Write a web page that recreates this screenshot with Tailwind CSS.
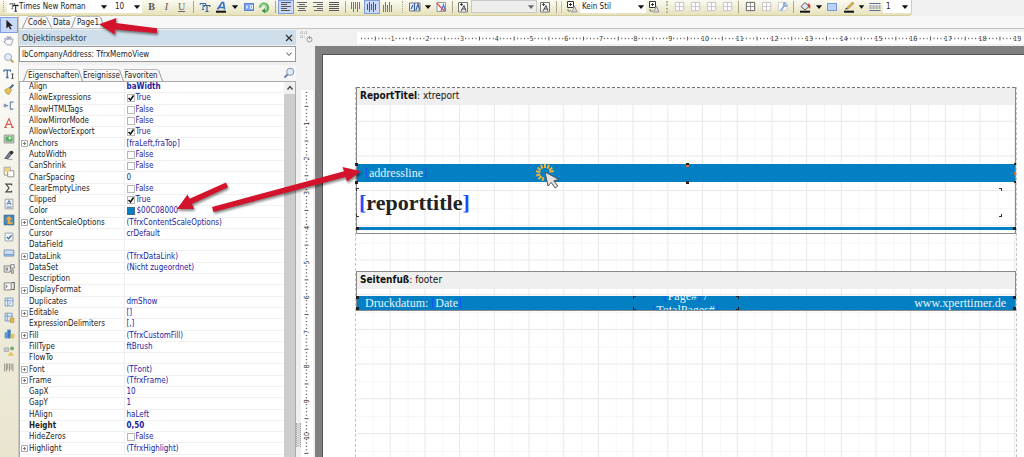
<!DOCTYPE html>
<html lang="de">
<head>
<meta charset="utf-8">
<title>Report Designer</title>
<script src="https://cdn.jsdelivr.net/npm/@tailwindcss/browser@4"></script>
</head>
<body class="relative flex h-screen flex-col overflow-hidden bg-[#f0f0f0] text-[8px] leading-[11px] text-[#222] font-['DejaVu_Sans_Condensed','Noto_Sans',sans-serif]">

<svg width="0" height="0" class="absolute">
  <defs>
    <symbol id="down" viewBox="0 0 8 8"><path d="M1.5 2.5h5L4 5.5z" fill="#111"/></symbol>
    <symbol id="lines-l" viewBox="0 0 12 12"><path d="M1 1.500h10M1 3.500h6M1 5.500h10M1 7.500h6M1 9.500h9" stroke="#555"/></symbol>
    <symbol id="lines-c" viewBox="0 0 12 12"><path d="M1 1.500h10M3 3.500h6M1 5.500h10M3 7.500h6M2 9.500h8" stroke="#666"/></symbol>
    <symbol id="lines-r" viewBox="0 0 12 12"><path d="M1 1.500h10M5 3.500h6M1 5.500h10M5 7.500h6M2 9.500h9" stroke="#666"/></symbol>
    <symbol id="lines-j" viewBox="0 0 12 12"><path d="M1 1.500h10M1 3.500h10M1 5.500h10M1 7.500h10M1 9.500h10" stroke="#555"/></symbol>
    <symbol id="v-top" viewBox="0 0 12 12"><path d="M1.500 1v7M3.500 1v10M5.500 1v7M7.500 1v10M9.500 1v7" stroke="#777"/></symbol>
    <symbol id="v-mid" viewBox="0 0 12 12"><path d="M1.500 3v6M3.500 1v10M5.500 3v6M7.500 1v10M9.500 3v6" stroke="#555"/></symbol>
    <symbol id="v-bot" viewBox="0 0 12 12"><path d="M1.500 4v7M3.500 1v10M5.500 4v7M7.500 1v10M9.500 4v7" stroke="#777"/></symbol>
    <symbol id="frame" viewBox="0 0 12 12"><path d="M1.500 1.500h9v9h-9zM6 1.500v9M1.500 6h9" fill="#fff" stroke="#c3c3c3"/></symbol>
    <symbol id="tt" viewBox="0 0 12 12"><path d="M1 2h6M4 2v6M2.800 8h2.400M1.200 1.500v2M6.800 1.500v2" stroke="#666" fill="none"/><path d="M5 4h6M8 4v7M6.500 11h3M5.200 3.500v2M10.800 3.500v2" stroke="#222" stroke-width="1.300" fill="none"/></symbol>
    <symbol id="style" viewBox="0 0 12 12"><path d="M1.500.5h6v6h-6zM3 3.500h3M4.500 2v3" fill="#fff" stroke="#333"/><path d="M6 10.500L8.500 5l2.500 6H5" stroke="#999" fill="#ddd"/><path d="M2 8v2h3" stroke="#777" fill="none"/></symbol>
    <symbol id="sheet" viewBox="0 0 12 12"><path d="M1.500 1.500h9v9.500h-9z" fill="#f8f8f8" stroke="#777"/><path d="M3 3.500h3M4.500 2v3M4 10l3-5.500L9 10M5 8h3" stroke="#444" fill="none"/></symbol>
  </defs>
</svg>

<!-- formatting toolbar -->
<header class="flex h-4 shrink-0">
  <div class="flex h-4 items-center rounded-br-sm border-b border-r border-[#d5cf9f] bg-gradient-to-b from-[#fbfaf2] to-[#e6e2bd] pb-1 pt-[2px]">
    <span class="flex w-[7px] justify-center"><span class="h-[11px] border-l border-dotted border-[#a9a68c]"></span></span>
    <label class="flex h-[13px] w-[105px] items-center bg-white pl-[2px]">
      <svg class="size-[10px]"><use href="#tt"/></svg>
      <select aria-label="Schriftart" class="w-[80px] appearance-none bg-transparent outline-none"><option>Times New Roman</option></select>
      <svg class="size-[10px]"><use href="#down"/></svg>
    </label>
    <label class="flex h-[13px] w-[30px] items-center bg-white pl-[3px]">
      <select aria-label="Schriftgröße" class="w-[17px] appearance-none bg-transparent outline-none"><option>10</option></select>
      <svg class="size-[10px]"><use href="#down"/></svg>
    </label>
    <button aria-label="Fett" class="ml-[2px] w-[15px] font-['Liberation_Serif',serif] text-[10px] font-bold text-[#555]">B</button>
    <button aria-label="Kursiv" class="w-[15px] font-['Liberation_Serif',serif] text-[10px] italic text-[#555]">I</button>
    <button aria-label="Unterstrichen" class="w-[15px] font-['Liberation_Serif',serif] text-[10px] text-[#666] underline">U</button>
    <span class="flex w-2 justify-center"><span class="h-3 w-px bg-[#aaa78c]"></span></span>
    <button aria-label="Schrift" class="flex w-[15px] justify-center"><svg class="size-3" viewBox="0 0 12 12" fill="none"><path d="M1 2.500h6M4 2.500v6M2.800 8.500h2.400M1.200 2v2M6.800 2v2" stroke="#3f74a8"/><path d="M5 4.500h6M8 4.500v6M6.500 10.500h3M5.200 4v2M10.800 4v2" stroke="#3a5f86" stroke-width="1.200"/></svg></button>
    <button aria-label="Schriftfarbe" class="flex w-[17px] justify-center"><svg class="size-3" viewBox="0 0 12 12" fill="none"><path d="M2.500 8.500L7 1.500h1.500L9.500 8.500M4 6.500h5.500" stroke="#3571c4" stroke-width="1.700"/><path d="M1 10.700h10" stroke="#111" stroke-width="2"/></svg></button>
    <button aria-label="Farben" class="flex w-3 justify-center"><svg class="size-[10px]"><use href="#down"/></svg></button>
    <button aria-label="Hervorheben" class="flex w-[15px] justify-center"><svg class="size-3" viewBox="0 0 12 12"><rect x="1.500" y="2.500" width="9" height="7" fill="#7fa6ee" stroke="#5d83cc"/><path d="M4 4.500v3M3 6h2M7.500 4.500h2v3h-2z" stroke="#e8f0ff" fill="none"/></svg></button>
    <button aria-label="Drehung" class="flex w-4 justify-center"><svg class="size-3" viewBox="0 0 12 12" fill="none"><path d="M2 6.500a4 4 0 1 1 4 4.300" stroke="#62b161" stroke-width="2.400"/><path d="M3.500 6a2.200 2.200 0 1 1 2.500 2" stroke="#a6d9a0" stroke-width="1.600"/><path d="M7 7.500v4.500L3.500 10z" fill="#3d8d48"/></svg></button>
    <span class="flex w-[6px] justify-center"><span class="h-3 w-px bg-[#aaa78c]"></span></span>
    <button aria-label="Links" class="flex h-[14px] w-4 items-center justify-center border border-[#7f9fdc] bg-[#c9d9f7]"><svg class="h-3 w-3 shrink-0"><use href="#lines-l"/></svg></button>
    <button aria-label="Zentriert" class="flex w-4 justify-center"><svg class="size-3"><use href="#lines-c"/></svg></button>
    <button aria-label="Rechts" class="flex w-4 justify-center"><svg class="size-3"><use href="#lines-r"/></svg></button>
    <button aria-label="Blocksatz" class="flex w-4 justify-center"><svg class="size-3"><use href="#lines-j"/></svg></button>
    <span class="flex w-[6px] justify-center"><span class="h-3 w-px bg-[#aaa78c]"></span></span>
    <button aria-label="Oben" class="flex w-4 justify-center"><svg class="size-3"><use href="#v-top"/></svg></button>
    <button aria-label="Mitte" class="flex h-[14px] w-4 items-center justify-center border border-[#7f9fdc] bg-[#c9d9f7]"><svg class="h-3 w-3 shrink-0"><use href="#v-mid"/></svg></button>
    <button aria-label="Unten" class="flex w-4 justify-center"><svg class="size-3"><use href="#v-bot"/></svg></button>
    <span class="flex w-[11px] justify-end"><span class="mr-1 h-3 border-l border-dotted border-[#a9a68c]"></span></span>
    <button aria-label="Bedingte Formatierung" class="flex w-4 justify-center"><svg class="size-3" viewBox="0 0 12 12" fill="none"><path d="M.5 2h10.500v8H.5z" fill="#eef2f8" stroke="#777"/><path d="M5.500 2v8M2 8l2-4M7 9l2-6 1.500 6" stroke="#3b62a5" stroke-width="1.200"/></svg></button>
    <button aria-label="Formatierungen" class="flex w-[10px] justify-center"><svg class="size-[10px]"><use href="#down"/></svg></button>
    <button aria-label="Formatierung löschen" class="flex w-4 justify-center"><svg class="size-3" viewBox="0 0 12 12" fill="none"><path d="M2 1.500h8.500v9H2z" fill="#f3f4f8" stroke="#999"/><path d="M6 10l2.500-6 2 6" stroke="#4d74c0" stroke-width="1.200"/><path d="M1.500 2l8 8" stroke="#dd5a5a" stroke-width="1.500"/></svg></button>
    <span class="flex w-[6px] justify-center"><span class="h-3 w-px bg-[#aaa78c]"></span></span>
    <button aria-label="Textstil einfügen" class="flex w-4 justify-center"><svg class="size-3"><use href="#sheet"/></svg></button>
    <label class="flex h-[13px] w-[66px] items-center justify-end border border-[#c9c9c9] bg-[#ededed]">
      <select aria-label="Textstil" class="w-[50px] appearance-none bg-transparent outline-none"><option></option></select>
      <svg class="size-[10px] opacity-60"><use href="#down"/></svg>
    </label>
    <button aria-label="Textstil entfernen" class="flex w-4 justify-center"><svg class="size-3"><use href="#sheet"/></svg></button>
    <span class="flex w-[11px] justify-center gap-1"><span class="h-3 w-px bg-[#aaa78c]"></span><span class="h-3 w-px bg-[#c5c2a8]"></span></span>
    <button aria-label="Stil hinzufügen" class="flex w-4 justify-center"><svg class="size-3"><use href="#style"/></svg></button>
    <label class="flex h-[13px] w-[66px] items-center bg-white pl-[2px]">
      <select aria-label="Stil" class="w-[54px] appearance-none bg-transparent outline-none"><option>Kein Stil</option></select>
      <svg class="size-[10px]"><use href="#down"/></svg>
    </label>
    <button aria-label="Stil entfernen" class="flex w-4 justify-center"><svg class="size-3"><use href="#style"/></svg></button>
    <span class="flex w-[9px] justify-center"><span class="h-3 border-l-2 border-dotted border-[#b9b69a]"></span></span>
    <button aria-label="Linie oben" class="flex w-4 justify-center"><svg class="size-[11px]"><use href="#frame"/></svg></button>
    <button aria-label="Linie unten" class="flex w-4 justify-center"><svg class="size-[11px]"><use href="#frame"/></svg></button>
    <button aria-label="Linie links" class="flex w-4 justify-center"><svg class="size-[11px]"><use href="#frame"/></svg></button>
    <button aria-label="Linie rechts" class="flex w-4 justify-center"><svg class="size-[11px]"><use href="#frame"/></svg></button>
    <span class="flex w-[7px] justify-center"><span class="h-3 w-px bg-[#aaa78c]"></span></span>
    <button aria-label="Alle Linien" class="flex w-4 justify-center"><svg class="size-[11px]" viewBox="0 0 12 12"><path d="M1.500 1.500h9v9h-9z" fill="#fff" stroke="#555"/><path d="M6 2v8M2 6h8" stroke="#8d8d8d"/></svg></button>
    <button aria-label="Keine Linien" class="flex w-4 justify-center"><svg class="size-[11px]"><use href="#frame"/></svg></button>
    <button aria-label="Rahmen bearbeiten" class="flex w-4 justify-center"><svg class="size-[11px]" viewBox="0 0 12 12"><path d="M1.500 1.500h9v9h-9z" fill="#fff" stroke="#ccc"/><path d="M3 10l4-5a2 2 0 0 1 3-3l-1 2 1.500.5 1-1a2 2 0 0 1-3 2.500L5 11z" fill="#89a9dd"/></svg></button>
    <span class="flex w-[7px] justify-center"><span class="h-3 w-px bg-[#aaa78c]"></span></span>
    <button aria-label="Füllfarbe" class="flex w-4 justify-center"><svg class="size-3" viewBox="0 0 12 12"><path d="M2 5.500L6 1.500l4 4-4 3.500z" fill="#dce6f7" stroke="#555"/><path d="M8.500 2.500c3 0 3.200 2.500 2.500 5.500L9 5z" fill="#d93a2b"/><path d="M1 10.700h10" stroke="#111" stroke-width="2"/></svg></button>
    <button aria-label="Füllfarben" class="flex w-[11px] justify-center"><svg class="size-[10px]"><use href="#down"/></svg></button>
    <button aria-label="Füllung" class="flex w-4 justify-center"><svg class="size-3" viewBox="0 0 12 12"><rect x="1.500" y="2.500" width="9" height="7" fill="#bcd4f7" stroke="#6f97da"/></svg></button>
    <button aria-label="Linienfarbe" class="flex w-[17px] justify-center"><svg class="size-3" viewBox="0 0 12 12"><path d="M3 7.500L9.500 1l1.500 1.500L5 8z" fill="#e0b54b" stroke="#8c7434" stroke-width=".6"/><path d="M2 8.500l1-1.500 2 1z" fill="#333"/><path d="M1 10.700h10" stroke="#111" stroke-width="2"/></svg></button>
    <button aria-label="Linienfarben" class="flex w-[9px] justify-center"><svg class="size-[10px]"><use href="#down"/></svg></button>
    <button aria-label="Linienart" class="flex w-[17px] justify-center"><svg class="size-3" viewBox="0 0 12 12"><path d="M.5 2.500h11M.5 9.500h11" stroke="#5a6f94"/><path d="M.5 5h11M.5 7h11" stroke="#5a6f94" stroke-dasharray="2 1"/></svg></button>
    <label class="flex h-[13px] w-7 items-center bg-white pl-[3px]">
      <select aria-label="Linienbreite" class="w-[14px] appearance-none bg-transparent outline-none"><option>1</option></select>
      <svg class="size-[10px]"><use href="#down"/></svg>
    </label>
  </div>
</header>

<div class="flex min-h-0 flex-1">
  <!-- object palette -->
  <nav class="w-[19px] shrink-0 border-r border-[#c9c7bc] bg-gradient-to-b from-[#fdfdfb] via-[#f1efe3] to-[#e9e5cf] pt-px">
    <div id="palette" class="flex h-[358px] flex-col justify-between"></div>
  </nav>

  <div class="flex min-w-0 flex-1 flex-col">
    <!-- page tabs -->
    <div class="flex h-[13px] shrink-0 items-end border-b border-[#c3c3c3] bg-[#f7f7f7] pl-[3px]">
      <svg class="h-3 w-[6px]" viewBox="0 0 6 12"><path d="M.5 12L5.500 1" stroke="#999" fill="none"/></svg>
      <button class="h-3 w-[18px] border-t border-[#bbb]">Code</button>
      <svg class="h-3 w-[6px]" viewBox="0 0 6 12"><path d="M.5 1L5.500 12" stroke="#999" fill="none"/></svg>
      <button class="h-3 w-[19px] border-t border-[#bbb]">Data</button>
      <svg class="h-3 w-[5px]" viewBox="0 0 5 12"><path d="M.5 12L4.500 1" stroke="#999" fill="none"/></svg>
      <button class="h-3 w-[24px] border-t border-[#bbb] bg-white">Page1</button>
      <svg class="h-3 w-[5px]" viewBox="0 0 5 12"><path d="M.5 1L4.500 12" stroke="#999" fill="none"/></svg>
    </div>

    <div class="flex min-h-0 flex-1">
      <!-- object inspector -->
      <aside class="flex w-[277px] shrink-0 flex-col pt-px">
        <div class="flex h-[15px] items-center justify-between bg-[#cfdeeb] pl-[3px] pr-[3px]">
          <h2 class="text-[9px] leading-[14px] text-[#2c3a4b]">Objektinspektor</h2>
          <button aria-label="Schließen"><svg class="size-2" viewBox="0 0 8 8"><path d="M1 1l6 6M7 1L1 7" stroke="#333" stroke-width="1.300"/></svg></button>
        </div>
        <label class="mt-px flex h-[16px] items-center border border-[#999] bg-white pl-[2px] pr-[2px]">
          <select aria-label="Objekt" class="flex-1 appearance-none bg-transparent outline-none"><option>lbCompanyAddress: TfrxMemoView</option></select>
          <svg class="size-2" viewBox="0 0 8 8"><path d="M1.500 2.500L4 5.500l2.500-3" stroke="#555" fill="none"/></svg>
        </label>
        <div class="mt-[3px] flex h-[16px] items-end bg-[#f7f7f7] pl-[4px] pr-px">
          <div class="flex flex-1 items-end">
            <svg class="h-3 w-[5px]" viewBox="0 0 5 12"><path d="M.5 12L4.500 1" stroke="#999" fill="none"/></svg>
            <button class="h-3 w-[50px] border-t border-[#bbb] bg-white">Eigenschaften</button>
            <svg class="h-3 w-[5px]" viewBox="0 0 5 12"><path d="M.5 1L4.500 12" stroke="#999" fill="none"/></svg>
            <button class="h-3 w-[36px] border-t border-[#bbb]">Ereignisse</button>
            <svg class="h-3 w-[5px]" viewBox="0 0 5 12"><path d="M.5 1L4.500 12" stroke="#999" fill="none"/></svg>
            <button class="h-3 w-[34px] border-t border-[#bbb]">Favoriten</button>
            <svg class="h-3 w-[5px]" viewBox="0 0 5 12"><path d="M.5 1L4.500 12" stroke="#999" fill="none"/></svg>
          </div>
          <button aria-label="Suchen" class="mb-[2px]"><svg class="size-3" viewBox="0 0 12 12"><circle cx="7.200" cy="4.800" r="3.600" fill="#dfeaf8" stroke="#7d95b8"/><path d="M4.500 7.500L1.500 10.500" stroke="#6d83a5" stroke-width="2"/></svg></button>
        </div>
        <div class="flex min-h-0 flex-1 border border-b-0 border-[#aaa] bg-white">
          <div class="min-w-0 flex-1 overflow-hidden">
            <table class="h-[373px] w-full table-fixed border-collapse">
              <colgroup><col class="w-[104px]"><col></colgroup>
              <tbody id="props"></tbody>
            </table>
          </div>
          <div class="flex w-[11px] flex-col bg-[#cdcdcd]">
            <div class="flex h-3 items-center justify-center bg-[#f0f0f0]"><svg class="size-2" viewBox="0 0 8 8"><path d="M1.500 5.500L4 2.500l2.500 3" stroke="#444" stroke-width="1.300" fill="none"/></svg></div>
          </div>
        </div>
      </aside>

      <!-- splitter and vertical ruler -->
      <div class="flex w-[19px] shrink-0 flex-col pt-px">
        <svg class="ml-[3px] h-4 w-4" viewBox="0 0 16 16" fill="none"><path d="M1 3h8M1 7h5M3 1v8M7 1v4" stroke="#aaa" stroke-dasharray="1 1"/><circle cx="10.500" cy="9.500" r="2.500" stroke="#999"/><path d="M10.500 6v3" stroke="#999"/></svg>
        <div class="mt-11 flex min-h-0 flex-1">
          <div class="flex w-[5px] flex-col justify-end pb-[10px]"><div class="h-6 w-full border-x border-dotted border-[#aaa] bg-[#d5d5d5]"></div></div>
          <svg id="vruler" class="h-full w-[12px] bg-white" aria-hidden="true"></svg>
        </div>
      </div>

      <!-- design surface -->
      <main class="flex min-w-0 flex-1 flex-col pt-[3px]">
        <svg id="hruler" class="ml-[42px] h-[12px] w-[calc(100%-42px)] shrink-0 bg-white" aria-hidden="true"></svg>
        <div class="mt-[2px] min-h-0 flex-1 bg-[#808080] pl-[7px] pt-2">
          <div class="relative h-full border-l border-t border-[#555] bg-white pl-[32px] pr-[7px] pt-[32px]">
            <div class="relative h-full border-x border-dashed border-[#c4c4c4]">
              <svg class="absolute inset-0 h-full w-full" aria-hidden="true">
                <defs>
                  <pattern id="grid" width="34.700" height="34.700" patternUnits="userSpaceOnUse"><path d="M17.300 0v34.700M0 17.300h34.700" stroke="#f6f6f6"/><path d="M34.200 0v34.700M0 34.200h34.700" stroke="#e8e8e8"/></pattern>
                </defs>
                <rect width="100%" height="100%" fill="url(#grid)"/>
              </svg>

              <section class="relative h-[147px] border border-t-0 border-[#8a8a8a]">
                <div class="border-t border-dashed border-[#777]"></div>
                <h3 class="h-[17px] bg-[#efefef] pl-[3px] text-[10px] leading-[15px] text-[#111]"><b>ReportTitel</b>: xtreport</h3>
                <div class="mt-[59px] flex h-[18px] items-center bg-[#0380c4] pl-[8px] font-['Liberation_Serif',serif] text-[12px] leading-[18px] text-[#e8f3fb]"><span class="text-[#1f4cff]">[</span>addressline<span class="text-[#1f4cff]">]</span></div>
                <div class="mr-[14px] mt-[5px] h-[30px] pl-[2px] font-['Liberation_Serif',serif] text-[22px] font-bold leading-[32px] text-[#222]"><span class="text-[#1f4cff]">[</span>reporttitle<span class="text-[#1f4cff]">]</span></div>
                <div class="mt-[10px] h-[3px] bg-[#0380c4]"></div>
                <i class="absolute left-[-2px] top-[76px] size-[3px] bg-[#222]"></i>
                <i class="absolute left-[-2px] top-[94px] size-[3px] bg-[#222]"></i>
                <i class="absolute left-1/2 top-[76px] h-1 w-[3px] border-t-2 border-[#222] bg-[#d9713a]"></i>
                <i class="absolute left-1/2 top-[94px] size-[3px] bg-[#222]"></i>
                <i class="absolute right-[-1px] top-[76px] size-[2px] bg-[#222]"></i>
                <i class="absolute right-[-1px] top-[85px] h-[3px] w-[2px] bg-[#d9713a]"></i>
                <i class="absolute right-[-1px] top-[94px] size-[2px] bg-[#222]"></i>
                <i class="absolute left-[-1px] top-[101px] size-[3px] border-l border-t border-[#333]"></i>
                <i class="absolute left-[-1px] top-[127px] size-[3px] border-b border-l border-[#333]"></i>
                <i class="absolute right-[13px] top-[101px] size-[3px] border-r border-t border-[#333]"></i>
                <i class="absolute right-[13px] top-[127px] size-[3px] border-b border-r border-[#333]"></i>
                <i class="absolute left-[-1px] top-[140px] size-[3px] bg-[#222]"></i>
                <i class="absolute right-[-1px] top-[140px] size-[3px] bg-[#222]"></i>
                <!-- click pointer -->
                <svg class="absolute left-[176px] top-[75px] h-8 w-8" viewBox="0 0 32 32" fill="none">
                  <g stroke="#f0b43a" stroke-width="2"><path d="M12 2v4M16 2.800l-1.500 3.700M19.300 5.500l-3 2.700M20.800 9l-4.300.8M8 2.800l1.500 3.700M4.700 5.500l3 2.700M3 9.300l4.300.6M3.300 13.500l4-1.300M5.500 17l3-3M9.500 18.800l.9-3.600"/></g>
                  <path d="M12 10l3 14 3.200-3.500 4 5.500 2.600-2-4-5.200 5-1.300z" fill="#e3e3e3" stroke="#555"/>
                </svg>
              </section>

              <section class="relative mt-[37px] h-[40px] border border-[#8a8a8a]">
                <h3 class="h-[17px] bg-[#efefef] pl-[3px] text-[10px] leading-[15px] text-[#111]"><b>Seitenfuß</b>: footer</h3>
                <div class="mt-[7px] flex h-[14px] justify-between overflow-hidden bg-[#0380c4] pl-2 pr-[9px] font-['Liberation_Serif',serif] text-[12px] leading-[15px] text-[#e8f3fb]">
                  <div class="flex-1">Druckdatum: <span class="text-[#1f4cff]">[</span>Date<span class="text-[#1f4cff]">]</span></div>
                  <div class="relative h-[14px] w-[106px] overflow-hidden text-center">
                    <i class="absolute left-0 top-0 size-[3px] border-l border-t border-[#222]"></i><i class="absolute bottom-0 left-0 size-[3px] border-b border-l border-[#222]"></i>
                    <i class="absolute right-0 top-0 size-[3px] border-r border-t border-[#222]"></i><i class="absolute bottom-0 right-0 size-[3px] border-b border-r border-[#222]"></i>
                    <p class="-mt-[7px] leading-[14px]"><span class="text-[#1f4cff]">[</span>Page#<span class="text-[#1f4cff]">]</span> / <br><span class="text-[#1f4cff]">[</span>TotalPages#<span class="text-[#1f4cff]">]</span></p>
                  </div>
                  <div class="flex-1 text-right">www.xperttimer.de</div>
                </div>
                <i class="absolute left-[-1px] top-6 size-[3px] bg-[#222]"></i><i class="absolute bottom-0 left-[-1px] size-[3px] bg-[#222]"></i>
                <i class="absolute right-[-1px] top-6 size-[3px] bg-[#222]"></i><i class="absolute bottom-0 right-[-1px] size-[3px] bg-[#222]"></i>
              </section>
            </div>
          </div>
        </div>
      </main>
    </div>
  </div>
</div>

<!-- annotation arrows -->
<svg class="pointer-events-none absolute left-0 top-0 h-[457px] w-[1024px] drop-shadow-[1px_2px_1px_rgba(0,0,0,0.45)]" viewBox="0 0 1024 457" fill="#d3132b" aria-hidden="true">
  <path d="M99 24.300L116.500 18l-.6 5L157 28.300v5L115.200 29.500l-.4 5z"/>
  <path d="M177 209L187.500 194.500l2 4.300L226 182.500l2 4.700L192 204l2.300 5z"/>
  <path d="M361 171.300L342.500 167l1.500 4.300L212 207l1.500 5L345.500 177l1.500 4.500z"/>
</svg>

<script>
const rows = [
  ['Align','baWidth','b'],['AllowExpressions','True','c'],['AllowHTMLTags','False','c'],['AllowMirrorMode','False','c'],
  ['AllowVectorExport','True','c'],['Anchors','[fraLeft,fraTop]','+'],['AutoWidth','False','c'],['CanShrink','False','c'],
  ['CharSpacing','0',''],['ClearEmptyLines','False','c'],['Clipped','True','c'],['Color','$00C08000','k'],
  ['ContentScaleOptions','(TfrxContentScaleOptions)','+'],['Cursor','crDefault',''],['DataField','',''],['DataLink','(TfrxDataLink)','+'],
  ['DataSet','(Nicht zugeordnet)',''],['Description','',''],['DisplayFormat','','+'],['Duplicates','dmShow',''],['Editable','[]','+'],
  ['ExpressionDelimiters','[,]',''],['Fill','(TfrxCustomFill)','+'],['FillType','ftBrush',''],['FlowTo','',''],['Font','(TFont)','+'],
  ['Frame','(TfrxFrame)','+'],['GapX','10',''],['GapY','1',''],['HAlign','haLeft',''],['Height','0,50','bh'],['HideZeros','False','c'],
  ['Highlight','(TfrxHighlight)','+']
];
document.getElementById('props').innerHTML = rows.map(([name, value, kind]) => {
  const bold = kind[0] === 'b' ? 'font-bold' : '';
  const toggle = kind === '+'
    ? '<svg class="size-[7px]" viewBox="0 0 7 7"><path d="M.5.5h6v6h-6z" fill="#fff" stroke="#aaa"/><path d="M2 3.500h3M3.500 2v3" stroke="#777"/></svg>' : '';
  let cell = value;
  if (kind === 'c') cell = `<label class="flex items-center gap-px"><span class="grid"><input type="checkbox" ${value === 'True' ? 'checked' : ''} class="peer col-start-1 row-start-1 size-2 appearance-none border border-[#b5b5b5] bg-white"><svg class="pointer-events-none invisible col-start-1 row-start-1 size-2 peer-checked:visible" viewBox="0 0 8 8"><path d="M1.500 4l2 2 3-4.500" stroke="#111" stroke-width="1.500" fill="none"/></svg></span>${value}</label>`;
  if (kind === 'k') cell = `<span class="flex items-center gap-[2px]"><i class="size-2 border border-[#3b6a88] bg-[#0380c4]"></i>${value}</span>`;
  return `<tr class="border-b border-[#f0f0f0]"><th scope="row" class="border-r border-[#eee] p-0 text-left leading-[10px] ${kind === 'bh' ? 'font-bold' : 'font-normal'}"><span class="flex items-center pl-px"><span class="w-2">${toggle}</span>${name}</span></th><td class="whitespace-nowrap p-0 pl-[2px] leading-[10px] text-[#1d1da0] ${bold}">${cell}</td></tr>`;
}).join('');

// One labelled mark per centimetre, with a longer tick at every half.
const pitch = 34.7;
function ruler(id, vertical, start, marks) {
  let out = '';
  for (let n = 1; n <= marks; n++) {
    const p = start + n * pitch / 10;
    if (n % 10 === 0) {
      out += vertical
        ? `<text transform="translate(8 ${p}) rotate(-90)" text-anchor="middle" font-size="7" fill="#333">${n / 10}</text>`
        : `<text x="${p}" y="9" text-anchor="middle" font-size="7" fill="#333">${n / 10}</text>`;
    } else {
      const h = n % 10 === 5 ? 2 : 0.7;
      out += vertical ? `<path d="M${5.5 - h} ${p}h${2 * h}" stroke="#555"/>` : `<path d="M${p} ${6.5 - h}v${2 * h}" stroke="#555"/>`;
    }
  }
  document.getElementById(id).innerHTML = out;
}
ruler('hruler', false, 1, 190);
ruler('vruler', true, -1, 105);

const tools = [
  ['Auswahl','<path d="M5 2v10l2.500-2.300L9.300 13l1.500-.8L9 9h3.500z" fill="#222"/>'],
  ['Hand','<path d="M4 8L3 5l1.200-.5L6 7V3h1.300l.5 3.500L9 3l1.200.3-.3 3.700L12 5l.8 1L10.500 12.500h-4L2 9z" fill="#fff" stroke="#8a93a8"/>'],
  ['Zoom','<circle cx="7" cy="7" r="4" fill="#e3eef9" stroke="#8fa3bf"/><path d="M10 10l3 3" stroke="#c49a4a" stroke-width="2.200"/>'],
  ['Text bearbeiten','<path d="M2 3.500h8M6 3.500V12M4.500 12h3M2.300 3v2.500M9.700 3v2.500" stroke="#4673a3" stroke-width="1.500" fill="none"/><path d="M12 8v5M10.800 8h2.400M10.800 13h2.400" stroke="#333"/>'],
  ['Format übertragen','<path d="M3 8l5-3 3 3-3 5-3-1z" fill="#e8c353" stroke="#93762a" stroke-width=".6"/><path d="M9 6l4-4" stroke="#5b6d96" stroke-width="2.500"/>'],
  ['Band','<path d="M2 7.500h5M9 3.500h4M9 11.500h4M9.500 3.500v8" stroke="#6d87a8" stroke-width="1.300" fill="none"/><path d="M2 5.500h3v4H2z" fill="#8c9fc0"/>'],
  ['Textobjekt','<path d="M3.500 13L8 3l4 10M5 9.500h5.500M2.500 13h3M10.500 13h3" stroke="#d9554d" stroke-width="1.300" fill="none"/>'],
  ['Bild','<path d="M2.500 3.500h11v9h-11z" fill="#ddd" stroke="#888"/><path d="M4 5h8v6H4z" fill="#58ad62"/><circle cx="9" cy="7" r="1.500" fill="#c8efb4"/>'],
  ['Zeichnen','<path d="M3 12l6-8 3 2-5 6z" fill="#6f7f98" stroke="#333" stroke-width=".7"/><circle cx="11" cy="5" r="2" fill="#333"/><path d="M6 13h6" stroke="#999"/>'],
  ['Unterbericht','<path d="M2.500 2.500h7v9h-7z" fill="#fff6d6" stroke="#998"/><path d="M6.500 6.500h7v7h-7z" fill="#fff" stroke="#888"/><path d="M3.500 3.500h5v4h-5z" fill="#efd275"/>'],
  ['Systemtext','<path d="M11 5V3.500H4.500L8 8l-3.500 4.500H11V11" stroke="#444" stroke-width="1.300" fill="none"/>'],
  ['RichText','<path d="M3.500 2.500h9v11h-9z" fill="#eef3f9" stroke="#999"/><path d="M5.500 9L8 4l2.500 5M6.500 7.500h3M5 11.500h6" stroke="#4470ab" fill="none"/>'],
  ['Diagramm','<path d="M2.500 2.500h11v11h-11z" fill="#4488bd" stroke="#34658c"/><path d="M4 7.500l4-4 4 4H9.500v3H12v2H6.500v-5z" fill="#f2ab3f"/>'],
  ['Kontrollkästchen','<path d="M3.500 3.500h9v9h-9z" fill="#f5f8fb" stroke="#8d9bb0"/><path d="M5.500 8l2 2 3.500-4" stroke="#456eab" stroke-width="1.500" fill="none"/>'],
  ['Schaltfläche','<path d="M2.500 4.500h11v7h-11z" fill="#cfe0f2" stroke="#6f8fb5"/><path d="M3 9h10v2H3z" fill="#7ba4d3"/>'],
  ['Liste','<path d="M2.500 4.500h7v7h-7zM10 3h4v4h-4zM11 9h2v4h-2z" fill="#f5f5f5" stroke="#777"/><path d="M4 7h3M4 9h3" stroke="#444"/>'],
  ['Auswahlliste','<path d="M2.500 4.500h8v8h-8z" fill="#f5f5f5" stroke="#777"/><path d="M4 7l2 1.500L4 10M11 4h3v8h-3" stroke="#444" fill="none"/>'],
  ['Tabelle','<path d="M3.500 3.500h9v9h-9z" fill="#e9f1fb" stroke="#7897c2"/><path d="M6.500 3.500v9M3.500 6.500h9M10 8l-2 3" stroke="#7897c2"/>'],
  ['Datenbank','<path d="M3.500 2.500h8v9h-8z" fill="#dfe9f6" stroke="#7897c2"/><path d="M6 2.500v9M3.500 6h8" stroke="#7897c2"/><path d="M9.500 8h4v5h-4z" fill="#f0b93e" stroke="#a87c22" stroke-width=".6"/>'],
  ['Säulen','<path d="M3 6h3v7H3z" fill="#5c9bd5"/><path d="M6 3h4v10H6z" fill="#3f7cc0"/><path d="M10 8h4v5h-4z" fill="#e8bf4c"/>'],
  ['Formen','<path d="M2.500 4.500h5v4h-5z" fill="#c6cbd4" stroke="#999" stroke-width=".7"/><circle cx="11.500" cy="5" r="2.200" fill="#68b26b"/><path d="M10 8.500l4 5H6.500z" fill="#e8c260"/>'],
  ['Barcode','<path d="M3 4v9M5 4v9M6.500 4v7M8.500 4v9M10.500 4v7M12.500 4v9" stroke="#8a8a80"/>']
];
document.getElementById('palette').innerHTML = tools.map(([label, icon], i) =>
  `<button aria-label="${label}" class="${i ? 'flex h-4 w-full items-center justify-center' : 'flex h-4 w-full items-center justify-center border border-[#7f9fdc] bg-[#c9d9f7]'}"><svg class="size-[14px]" viewBox="0 0 16 16">${icon}</svg></button>`).join('');
</script>
</body>
</html>
